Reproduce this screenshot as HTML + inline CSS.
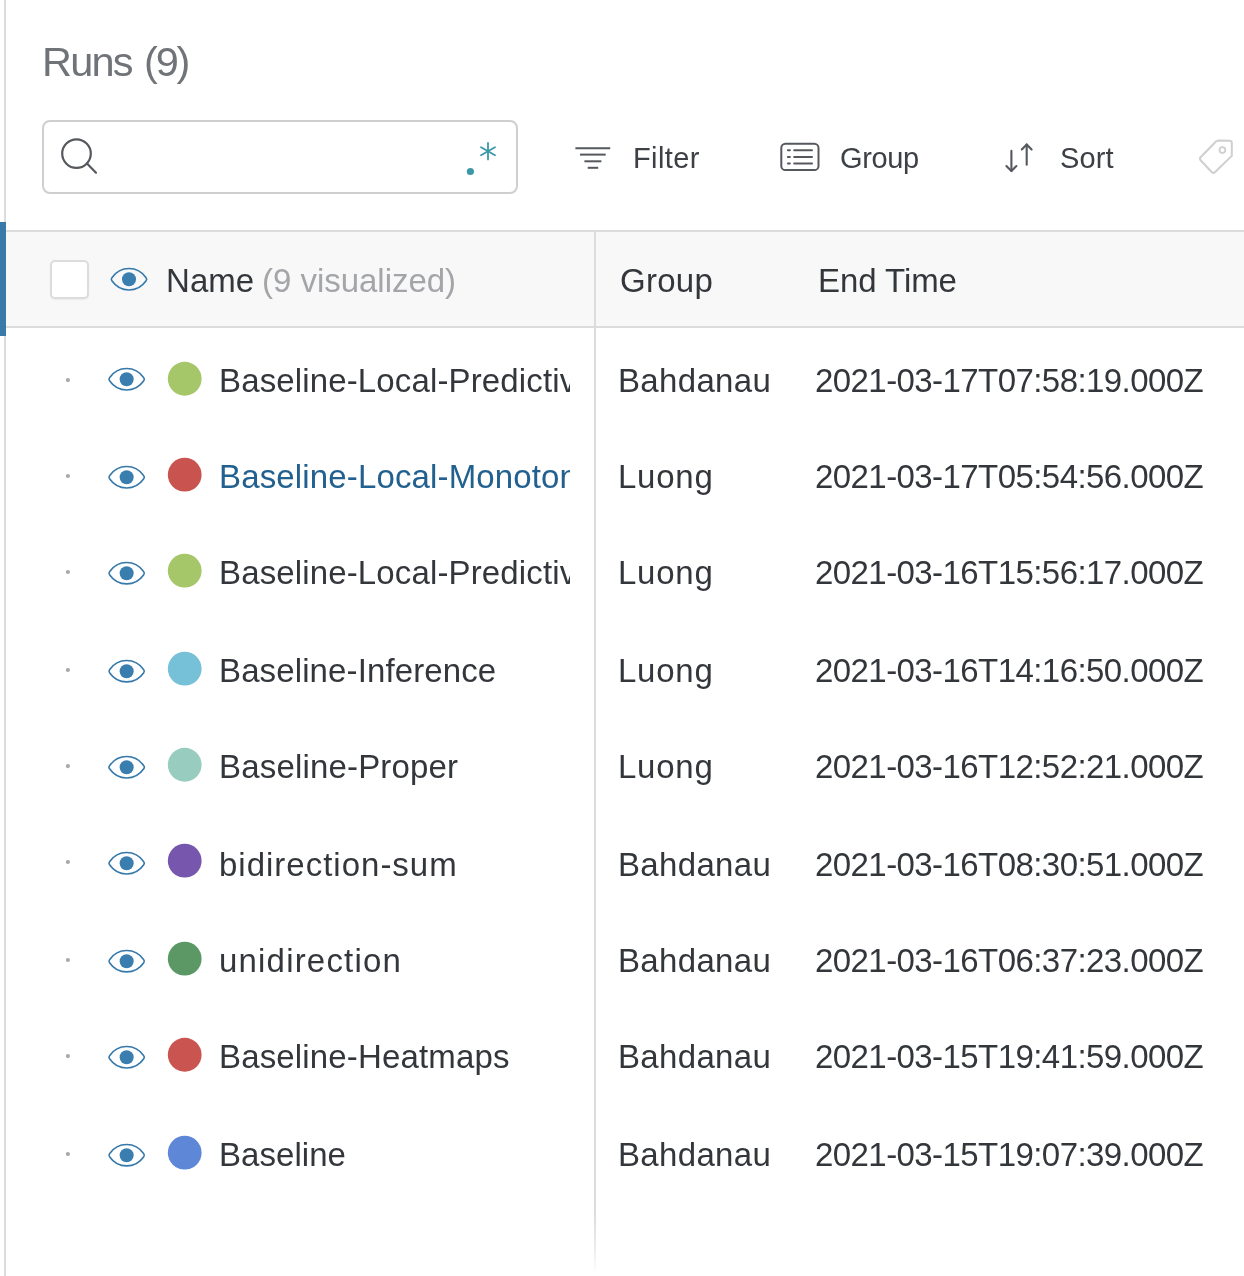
<!DOCTYPE html>
<html><head><meta charset="utf-8">
<style>
html,body{margin:0;padding:0;}
body{width:1244px;height:1276px;overflow:hidden;background:#fff;position:relative;font-family:"Liberation Sans", sans-serif;}
.t{position:absolute;white-space:nowrap;font-family:"Liberation Sans", sans-serif;will-change:transform;}
.clip{position:absolute;left:0;width:570px;overflow:hidden;}
.abs{position:absolute;}
</style></head><body>
<div class="abs" style="left:4px;top:0;width:2px;height:1276px;background:#dcdcdc;"></div>
<div class="abs" style="left:0;top:222px;width:6px;height:114px;background:#3a7aa9;"></div>
<div class="abs" style="left:42px;top:120px;width:472px;height:70px;border:2px solid #cfcfcf;border-radius:8px;"></div>
<div class="abs" style="left:6px;top:230px;width:1238px;height:2px;background:#dcdcdc;"></div>
<div class="abs" style="left:6px;top:232px;width:1238px;height:94px;background:#f8f8f8;"></div>
<div class="abs" style="left:6px;top:326px;width:1238px;height:2px;background:#dcdcdc;"></div>
<div class="abs" style="left:594px;top:230px;width:2px;height:1046px;background:linear-gradient(to bottom,#dcdcdc 0,#dcdcdc 984px,rgba(220,220,220,0.55) 1018px,rgba(220,220,220,0) 1044px);"></div>
<div class="abs" style="left:50.4px;top:260.4px;width:39px;height:39px;box-sizing:border-box;border:2px solid #dcdcdc;border-radius:5px;background:#fff;box-shadow:0 1px 2px rgba(0,0,0,0.06);"></div>
<svg class="abs" style="left:0;top:0" width="1244" height="1276" viewBox="0 0 1244 1276">
<defs>
<g id="eye">
<path d="M-17.1 -1.5 C-13.3 -7 -6.8 -10.7 0 -10.7 C6.8 -10.7 13.3 -7 17.1 -1.5 Q18.3 0 17.1 1.5 C13.3 7 6.8 10.7 0 10.7 C-6.8 10.7 -13.3 7 -17.1 1.5 Q-18.3 0 -17.1 -1.5 Z" fill="none" stroke="#3579ab" stroke-width="1.6" stroke-linejoin="round"/>
<circle cx="0" cy="0" r="7" fill="#3a7daf"/>
</g>
</defs>
<!-- search icon -->
<circle cx="76.5" cy="153.6" r="14.3" fill="none" stroke="#55585c" stroke-width="2.2"/>
<line x1="87" y1="163.6" x2="96" y2="172.7" stroke="#55585c" stroke-width="2.2" stroke-linecap="round"/>
<!-- regex -->
<circle cx="470.4" cy="171.5" r="3.6" fill="#3b98a9"/>
<g stroke="#3b98a9" stroke-width="1.8" stroke-linecap="round">
<line x1="488" y1="143" x2="488" y2="159.4"/>
<line x1="481" y1="147.3" x2="495" y2="155.3"/>
<line x1="481" y1="155.3" x2="495" y2="147.3"/>
</g>
<!-- filter icon -->
<g stroke="#55585c" stroke-width="2" stroke-linecap="butt">
<line x1="575.4" y1="148.2" x2="610.2" y2="148.2"/>
<line x1="580" y1="154.6" x2="605.7" y2="154.6"/>
<line x1="584.4" y1="161.3" x2="601.4" y2="161.3"/>
<line x1="587.7" y1="167.8" x2="598.2" y2="167.8"/>
</g>
<!-- group icon -->
<rect x="781.3" y="143.8" width="37.2" height="26.3" rx="4.2" fill="none" stroke="#55585c" stroke-width="2"/>
<g stroke="#55585c" stroke-width="2" stroke-linecap="round">
<line x1="787.9" y1="150.3" x2="789.9" y2="150.3"/><line x1="794.2" y1="150.3" x2="812" y2="150.3"/>
<line x1="787.9" y1="156.9" x2="789.9" y2="156.9"/><line x1="794.2" y1="156.9" x2="812" y2="156.9"/>
<line x1="787.9" y1="163.5" x2="789.9" y2="163.5"/><line x1="794.2" y1="163.5" x2="812" y2="163.5"/>
</g>
<!-- sort icon -->
<g stroke="#55585c" stroke-width="2.1" fill="none" stroke-linecap="round" stroke-linejoin="round">
<path d="M1011.4 150.9 V171"/><path d="M1006.4 166.1 L1011.4 171.1 L1016.4 166.1"/>
<path d="M1026.7 164.8 V144.5"/><path d="M1021.8 149.4 L1026.7 144.4 L1031.6 149.4"/>
</g>
<!-- tag icon -->
<path d="M1218.6 140.6 L1229.6 140.8 Q1231.8 140.8 1231.8 143 L1231.8 155.9 L1214.9 172.2 Q1213.4 173.6 1211.9 172.2 L1200.6 160.3 Q1199.2 158.8 1200.6 157.3 L1215.7 141.8 Q1216.8 140.6 1218.6 140.6 Z" fill="none" stroke="#cfcfcf" stroke-width="2" stroke-linejoin="round"/>
<circle cx="1222.4" cy="150.1" r="2.9" fill="none" stroke="#cfcfcf" stroke-width="1.8"/>
<!-- header eye -->
<use href="#eye" x="129" y="279.25"/>
<circle cx="67.9" cy="380.05" r="2.1" fill="#a9a9a9"/>
<use href="#eye" x="126.65" y="379.25"/>
<circle cx="184.72" cy="378.75" r="16.9" fill="#a6c66a"/>
<circle cx="67.9" cy="476.00" r="2.1" fill="#a9a9a9"/>
<use href="#eye" x="126.65" y="477.25"/>
<circle cx="184.72" cy="474.70" r="16.9" fill="#c9544f"/>
<circle cx="67.9" cy="572.00" r="2.1" fill="#a9a9a9"/>
<use href="#eye" x="126.65" y="573.20"/>
<circle cx="184.72" cy="570.70" r="16.9" fill="#a6c66a"/>
<circle cx="67.9" cy="670.00" r="2.1" fill="#a9a9a9"/>
<use href="#eye" x="126.65" y="671.20"/>
<circle cx="184.72" cy="668.70" r="16.9" fill="#77c1d8"/>
<circle cx="67.9" cy="766.05" r="2.1" fill="#a9a9a9"/>
<use href="#eye" x="126.65" y="767.25"/>
<circle cx="184.72" cy="764.75" r="16.9" fill="#98ccbf"/>
<circle cx="67.9" cy="862.00" r="2.1" fill="#a9a9a9"/>
<use href="#eye" x="126.65" y="863.25"/>
<circle cx="184.72" cy="860.70" r="16.9" fill="#7756ad"/>
<circle cx="67.9" cy="960.00" r="2.1" fill="#a9a9a9"/>
<use href="#eye" x="126.65" y="961.20"/>
<circle cx="184.72" cy="958.70" r="16.9" fill="#5c9866"/>
<circle cx="67.9" cy="1056.05" r="2.1" fill="#a9a9a9"/>
<use href="#eye" x="126.65" y="1057.25"/>
<circle cx="184.72" cy="1054.75" r="16.9" fill="#ca5450"/>
<circle cx="67.9" cy="1154.00" r="2.1" fill="#a9a9a9"/>
<use href="#eye" x="126.65" y="1155.20"/>
<circle cx="184.72" cy="1152.70" r="16.9" fill="#5f87d8"/>
</svg>
<div class="t" style="left:41.80px;top:41.07px;font-size:41.5px;line-height:41.5px;color:#707378;letter-spacing:-1.792px;">Runs</div>
<div class="t" style="left:144.18px;top:41.07px;font-size:41.5px;line-height:41.5px;color:#707378;letter-spacing:-2.161px;">(9)</div>
<div class="t" style="left:633.22px;top:144.05px;font-size:29px;line-height:29px;color:#3d4045;letter-spacing:0.403px;">Filter</div>
<div class="t" style="left:839.94px;top:144.05px;font-size:29px;line-height:29px;color:#3d4045;letter-spacing:-0.356px;">Group</div>
<div class="t" style="left:1060.18px;top:144.05px;font-size:29px;line-height:29px;color:#3d4045;letter-spacing:0.115px;">Sort</div>
<div class="t" style="left:166.09px;top:264.07px;font-size:33px;line-height:33px;color:#33363b;letter-spacing:0.049px;">Name</div>
<div class="t" style="left:261.65px;top:264.07px;font-size:33px;line-height:33px;color:#a3a5a8;letter-spacing:-0.024px;">(9 visualized)</div>
<div class="t" style="left:619.94px;top:264.07px;font-size:33px;line-height:33px;color:#33363b;letter-spacing:0.257px;">Group</div>
<div class="t" style="left:817.89px;top:264.07px;font-size:33px;line-height:33px;color:#33363b;letter-spacing:-0.063px;">End Time</div>
<div class="clip" style="top:351.80px;height:60px;"><div class="t" style="left:218.89px;top:12.07px;font-size:33px;line-height:33px;color:#33363b;letter-spacing:0.138px;">Baseline-Local-Predictive</div></div>
<div class="t" style="left:617.89px;top:363.87px;font-size:33px;line-height:33px;color:#33363b;letter-spacing:0.331px;">Bahdanau</div>
<div class="t" style="left:815.34px;top:363.87px;font-size:33px;line-height:33px;color:#33363b;letter-spacing:-0.570px;">2021-03-17T07:58:19.000Z</div>
<div class="clip" style="top:447.80px;height:60px;"><div class="t" style="left:218.89px;top:12.07px;font-size:33px;line-height:33px;color:#22608f;letter-spacing:0.147px;">Baseline-Local-Monotonic</div></div>
<div class="t" style="left:617.89px;top:459.87px;font-size:33px;line-height:33px;color:#33363b;letter-spacing:0.767px;">Luong</div>
<div class="t" style="left:815.34px;top:459.87px;font-size:33px;line-height:33px;color:#33363b;letter-spacing:-0.570px;">2021-03-17T05:54:56.000Z</div>
<div class="clip" style="top:543.80px;height:60px;"><div class="t" style="left:218.89px;top:12.07px;font-size:33px;line-height:33px;color:#33363b;letter-spacing:0.138px;">Baseline-Local-Predictive</div></div>
<div class="t" style="left:617.89px;top:555.87px;font-size:33px;line-height:33px;color:#33363b;letter-spacing:0.767px;">Luong</div>
<div class="t" style="left:815.34px;top:555.87px;font-size:33px;line-height:33px;color:#33363b;letter-spacing:-0.570px;">2021-03-16T15:56:17.000Z</div>
<div class="clip" style="top:641.80px;height:60px;"><div class="t" style="left:218.89px;top:12.07px;font-size:33px;line-height:33px;color:#33363b;letter-spacing:0.118px;">Baseline-Inference</div></div>
<div class="t" style="left:617.89px;top:653.87px;font-size:33px;line-height:33px;color:#33363b;letter-spacing:0.767px;">Luong</div>
<div class="t" style="left:815.34px;top:653.87px;font-size:33px;line-height:33px;color:#33363b;letter-spacing:-0.570px;">2021-03-16T14:16:50.000Z</div>
<div class="clip" style="top:737.80px;height:60px;"><div class="t" style="left:218.89px;top:12.07px;font-size:33px;line-height:33px;color:#33363b;letter-spacing:0.174px;">Baseline-Proper</div></div>
<div class="t" style="left:617.89px;top:749.87px;font-size:33px;line-height:33px;color:#33363b;letter-spacing:0.767px;">Luong</div>
<div class="t" style="left:815.34px;top:749.87px;font-size:33px;line-height:33px;color:#33363b;letter-spacing:-0.570px;">2021-03-16T12:52:21.000Z</div>
<div class="clip" style="top:835.80px;height:60px;"><div class="t" style="left:219.47px;top:12.07px;font-size:33px;line-height:33px;color:#33363b;letter-spacing:0.997px;">bidirection-sum</div></div>
<div class="t" style="left:617.89px;top:847.87px;font-size:33px;line-height:33px;color:#33363b;letter-spacing:0.331px;">Bahdanau</div>
<div class="t" style="left:815.34px;top:847.87px;font-size:33px;line-height:33px;color:#33363b;letter-spacing:-0.570px;">2021-03-16T08:30:51.000Z</div>
<div class="clip" style="top:931.80px;height:60px;"><div class="t" style="left:219.46px;top:12.07px;font-size:33px;line-height:33px;color:#33363b;letter-spacing:1.192px;">unidirection</div></div>
<div class="t" style="left:617.89px;top:943.87px;font-size:33px;line-height:33px;color:#33363b;letter-spacing:0.331px;">Bahdanau</div>
<div class="t" style="left:815.34px;top:943.87px;font-size:33px;line-height:33px;color:#33363b;letter-spacing:-0.570px;">2021-03-16T06:37:23.000Z</div>
<div class="clip" style="top:1027.80px;height:60px;"><div class="t" style="left:218.89px;top:12.07px;font-size:33px;line-height:33px;color:#33363b;letter-spacing:0.151px;">Baseline-Heatmaps</div></div>
<div class="t" style="left:617.89px;top:1039.87px;font-size:33px;line-height:33px;color:#33363b;letter-spacing:0.331px;">Bahdanau</div>
<div class="t" style="left:815.34px;top:1039.87px;font-size:33px;line-height:33px;color:#33363b;letter-spacing:-0.570px;">2021-03-15T19:41:59.000Z</div>
<div class="clip" style="top:1125.80px;height:60px;"><div class="t" style="left:218.89px;top:12.07px;font-size:33px;line-height:33px;color:#33363b;letter-spacing:0.055px;">Baseline</div></div>
<div class="t" style="left:617.89px;top:1137.87px;font-size:33px;line-height:33px;color:#33363b;letter-spacing:0.331px;">Bahdanau</div>
<div class="t" style="left:815.34px;top:1137.87px;font-size:33px;line-height:33px;color:#33363b;letter-spacing:-0.570px;">2021-03-15T19:07:39.000Z</div>

</body></html>
